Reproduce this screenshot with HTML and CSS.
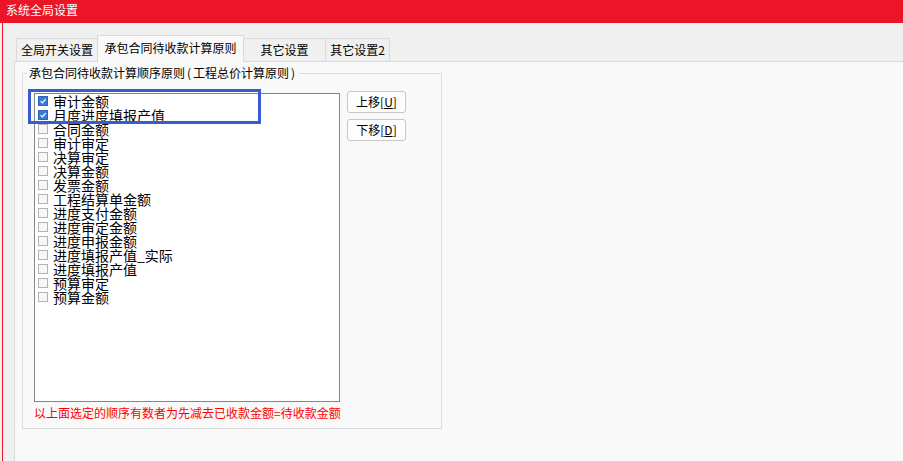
FILE: index.html
```html
<!DOCTYPE html>
<html lang="zh-CN">
<head>
<meta charset="utf-8">
<title>系统全局设置</title>
<link rel="stylesheet" href="styles.css">
</head>
<body>
<div class="titlebar">系统全局设置</div>
<div class="frame">
  <div class="client">
    <div class="tabs">
      <div class="tab t1">全局开关设置</div>
      <div class="tab active t2">承包合同待收款计算原则</div>
      <div class="tab t3">其它设置</div>
      <div class="tab t4">其它设置2</div>
    </div>
    <div class="panel">
      <fieldset class="group">
        <legend>承包合同待收款计算顺序原则<span class="par">(</span>工程总价计算原则<span class="par">)</span></legend>
        <div class="row">
          <div class="listwrap">
            <ul class="list">
              <li><span class="cb on"><svg viewBox="0 0 10 10"><path d="M2 5.2 L4.2 7.3 L8.2 2.8" fill="none" stroke="#fff" stroke-width="1.5"/></svg></span>审计金额</li>
              <li><span class="cb on"><svg viewBox="0 0 10 10"><path d="M2 5.2 L4.2 7.3 L8.2 2.8" fill="none" stroke="#fff" stroke-width="1.5"/></svg></span>月度进度填报产值</li>
              <li><span class="cb"></span>合同金额</li>
              <li><span class="cb"></span>审计审定</li>
              <li><span class="cb"></span>决算审定</li>
              <li><span class="cb"></span>决算金额</li>
              <li><span class="cb"></span>发票金额</li>
              <li><span class="cb"></span>工程结算单金额</li>
              <li><span class="cb"></span>进度支付金额</li>
              <li><span class="cb"></span>进度审定金额</li>
              <li><span class="cb"></span>进度申报金额</li>
              <li><span class="cb"></span>进度填报产值_实际</li>
              <li><span class="cb"></span>进度填报产值</li>
              <li><span class="cb"></span>预算审定</li>
              <li><span class="cb"></span>预算金额</li>
            </ul>
            <div class="highlight"></div>
          </div>
          <div class="buttons">
            <button class="btn">上移[<u>U</u>]</button>
            <button class="btn">下移[<u>D</u>]</button>
          </div>
        </div>
        <div class="note">以上面选定的顺序有数者为先减去已收款金额=待收款金额</div>
      </fieldset>
    </div>
  </div>
</div>
</body>
</html>
```

FILE: styles.css
```css
html, body {
  margin: 0;
  padding: 0;
  height: 100%;
  overflow: hidden;
}
body {
  background: #f0f0f0;
  font-family: "Noto Sans CJK SC", "Liberation Sans", sans-serif;
  font-size: 12px;
  color: #000;
  display: flex;
  flex-direction: column;
}
.titlebar {
  height: 23px;
  flex: none;
  background: #ec1427;
  color: #fff;
  font-size: 12px;
  line-height: 20px;
  padding-left: 6px;
  box-sizing: border-box;
}
.frame {
  flex: 1;
  margin-left: 2px;
  border-left: 1px solid #ec1427;
  display: flex;
  flex-direction: column;
  min-height: 0;
}
.client {
  flex: 1;
  display: flex;
  flex-direction: column;
  padding: 12px 0 0 11px;
  min-height: 0;
}
.tabs {
  display: flex;
  align-items: flex-end;
  margin-left: 2px;
  height: 26px;
  flex: none;
}
.tab {
  box-sizing: border-box;
  height: 23px;
  border: 1px solid #d9d9d9;
  border-bottom: none;
  background: #f0f0f0;
  text-align: center;
  line-height: 22px;
  font-size: 12px;
  color: #000;
}
.tab + .tab {
  border-left: none;
}
.t1 { width: 82px; }
.t2 { width: 147px; }
.t3 { width: 82px; }
.t4 { width: 64px; }
.tab.active {
  height: 27px;
  background: #f9f9f9;
  line-height: 24px;
  border-left: 1px solid #d9d9d9;
  margin-left: -1px;
  position: relative;
  top: 1px;
  z-index: 2;
}
.tab.active + .tab {
  border-left: none;
}
.panel {
  flex: 1;
  background: #f9f9f9;
  border-top: 1px solid #d9d9d9;
  border-left: 1px solid #d9d9d9;
  min-height: 0;
}
.group {
  box-sizing: border-box;
  width: 420px;
  margin: 4px 0 0 7px;
  padding: 11px 11px 7px 11px;
  border: 1px solid #dcdcdc;
  min-width: 0;
}
.group legend {
  font-size: 12px;
  line-height: 14px;
  padding: 0 2px;
  margin-left: -7px;
  color: #000;
}
.par {
  margin: 0 2px;
}
.row {
  display: flex;
  align-items: flex-start;
  gap: 7px;
}
.listwrap {
  position: relative;
  margin-top: 2px;
}
.list {
  list-style: none;
  margin: 0;
  padding: 0;
  box-sizing: border-box;
  width: 306px;
  height: 309px;
  border: 1px solid #82878f;
  background: #fff;
}
.list li {
  display: flex;
  align-items: center;
  height: 14px;
  font-size: 14px;
  line-height: 14px;
  white-space: nowrap;
  padding-left: 3px;
}
.cb {
  box-sizing: border-box;
  width: 10px;
  height: 10px;
  flex: none;
  border: 1px solid #b3b3b3;
  background: #f7f7f7;
  margin-right: 5px;
  display: flex;
}
.cb.on {
  background: #3b7bd6;
  border-color: #2c63b6;
}
.cb svg {
  width: 8px;
  height: 8px;
}
.highlight {
  position: absolute;
  left: -6px;
  top: -4px;
  width: 233px;
  height: 35px;
  box-sizing: border-box;
  border: 3px solid #3a5bd0;
  pointer-events: none;
}
.buttons {
  display: flex;
  flex-direction: column;
  gap: 6px;
}
.btn {
  box-sizing: border-box;
  width: 59px;
  height: 22px;
  padding: 0;
  border: 1px solid #c6c6c6;
  border-radius: 3px;
  background: #fdfdfd;
  font-family: "Noto Sans CJK SC", "Liberation Sans", sans-serif;
  font-size: 12px;
  line-height: 18px;
  color: #000;
}
.note {
  margin-top: 3px;
  font-size: 12px;
  line-height: 16px;
  color: #ff0000;
  white-space: nowrap;
}
```
